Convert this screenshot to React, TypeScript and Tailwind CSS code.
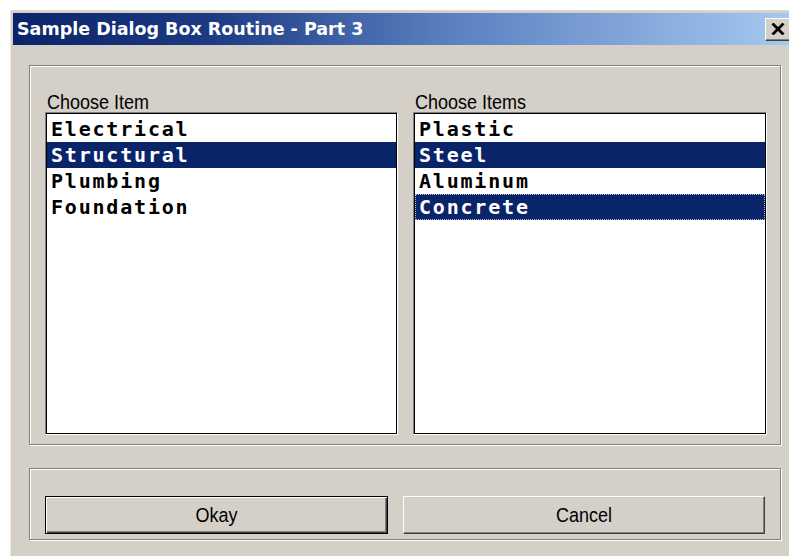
import { useState } from 'react';

const leftItems = ['Electrical', 'Structural', 'Plumbing', 'Foundation'];
const rightItems = ['Plastic', 'Steel', 'Aluminum', 'Concrete'];

const labelFont = { fontFamily: '"Liberation Sans", Arial, sans-serif' };
const listFont = { fontFamily: '"DejaVu Sans Mono", "Liberation Mono", monospace' };

// Classic listbox: sunken frame, one row per item, selected rows in navy
const ListBox = ({
  label,
  items,
  selected,
  focused,
  width,
  onToggle,
}: {
  label: string;
  items: string[];
  selected: number[];
  focused?: number;
  width: string;
  onToggle: (i: number) => void;
}) => (
  <div className={`flex flex-col ${width}`}>
    <div className="h-[20px] pl-[2px] text-[18px] leading-[20px] text-black" style={labelFont}>
      <span className="inline-block scale-y-[1.15]">{label}</span>
    </div>
    <div className="h-[323px] border border-t-[#808080] border-l-[#808080] border-b-white border-r-white">
      <div className="h-full border border-black bg-white pt-[2px]">
        {items.map((item, i) => {
          const isSel = selected.includes(i);
          return (
            <div
              key={item}
              onClick={() => onToggle(i)}
              className={`h-[26px] pl-[4px] text-[20px] font-bold leading-[26px] tracking-[1.8px] select-none ${
                isSel ? 'bg-[#0a246a] text-white' : 'text-black'
              } ${focused === i ? 'outline-1 outline-dotted outline-[#b8c0dc] -outline-offset-1' : ''}`}
              style={listFont}
            >
              {item}
            </div>
          );
        })}
      </div>
    </div>
  </div>
);

const Button = ({ label, isDefault, width }: { label: string; isDefault?: boolean; width: string }) => (
  <button
    className={`h-[38px] ${width} bg-[#d4d0c8] text-[18px] text-black ${
      isDefault
        ? 'border border-black shadow-[inset_1px_1px_0_#fff,inset_-1px_-1px_0_#404040,inset_-2px_-2px_0_#808080]'
        : 'border border-t-white border-l-white border-b-[#404040] border-r-[#404040] shadow-[inset_-1px_-1px_0_#808080]'
    }`}
    style={labelFont}
  >
    <span className="inline-block scale-y-[1.15]">{label}</span>
  </button>
);

export default function App() {
  const [left, setLeft] = useState<number[]>([1]);
  const [right, setRight] = useState<number[]>([1, 3]);

  const toggleRight = (i: number) =>
    setRight((prev) => (prev.includes(i) ? prev.filter((x) => x !== i) : [...prev, i]));

  return (
    <div className="w-[789px] h-[556px] overflow-hidden bg-white pt-[10px] pl-[10px]">
      <div className="w-[790px] h-[560px] bg-[#d4d0c8] border-l border-t border-l-[#ece9e2] border-t-[#dcd8d0] pt-[2px] pl-[2px]">
        {/* title bar */}
        <div className="flex h-[32px] w-[784px] items-center justify-between bg-[linear-gradient(to_right,#0a246a_0%,#1c3a82_25%,#5a7ec0_55%,#a6caf0_100%)] pl-[4px] pr-[2px]">
          <span
            className="text-[17.5px] font-bold text-white"
            style={{ fontFamily: '"DejaVu Sans", Verdana, sans-serif' }}
          >
            Sample Dialog Box Routine - Part 3
          </span>
          <button className="flex h-[23px] w-[30px] items-center justify-start pl-[5px] bg-[#d4d0c8] border border-t-white border-l-white border-b-[#404040] border-r-[#404040] shadow-[inset_-1px_-1px_0_#808080]">
            <svg width="14" height="12" viewBox="0 0 14 12">
              <path d="M1.5 0.5 L12.5 11.5 M12.5 0.5 L1.5 11.5" stroke="black" strokeWidth="2.8" />
            </svg>
          </button>
        </div>

        {/* list group */}
        <div className="ml-[16px] mt-[20px] flex h-[380px] w-[752px] gap-[15px] border border-[#808080] pl-[15px] pt-[26px] shadow-[inset_1px_1px_0_#fff,1px_1px_0_#fff]">
          <ListBox
            label="Choose Item"
            items={leftItems}
            selected={left}
            width="w-[353px]"
            onToggle={(i) => setLeft([i])}
          />
          <ListBox
            label="Choose Items"
            items={rightItems}
            selected={right}
            focused={3}
            width="w-[354px]"
            onToggle={toggleRight}
          />
        </div>

        {/* button group */}
        <div className="ml-[16px] mt-[23px] flex h-[72px] w-[752px] gap-[15px] border border-[#808080] pl-[15px] pt-[27px] shadow-[inset_1px_1px_0_#fff,1px_1px_0_#fff]">
          <Button label="Okay" isDefault width="w-[343px]" />
          <Button label="Cancel" width="w-[362px]" />
        </div>
      </div>
    </div>
  );
}
